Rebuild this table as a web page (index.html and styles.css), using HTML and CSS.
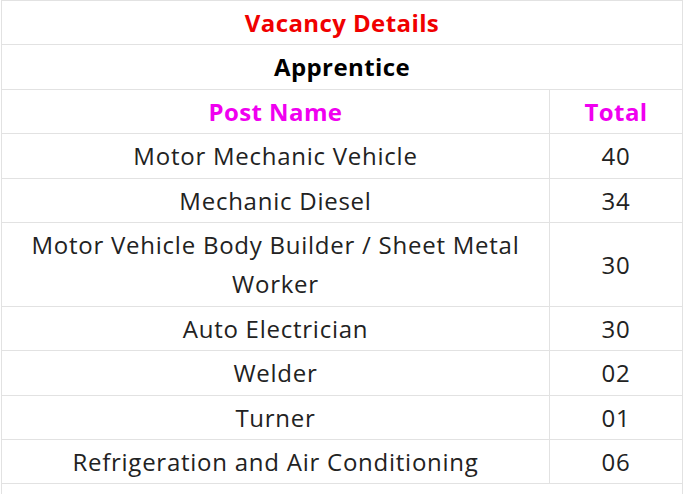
FILE: index.html
```html
<!DOCTYPE html>
<html lang="en">
<head>
<meta charset="utf-8">
<title>Vacancy Details</title>
<link rel="stylesheet" href="styles.css">
</head>
<body>
<table class="vacancy">
  <colgroup>
    <col class="col-name">
    <col class="col-total">
  </colgroup>
  <tbody>
    <tr><th colspan="2" class="title">Vacancy Details</th></tr>
    <tr><th colspan="2" class="subtitle">Apprentice</th></tr>
    <tr><th class="head">Post Name</th><th class="head">Total</th></tr>
    <tr><td>Motor Mechanic Vehicle</td><td>40</td></tr>
    <tr><td>Mechanic Diesel</td><td>34</td></tr>
    <tr><td>Motor Vehicle Body Builder / Sheet Metal Worker</td><td>30</td></tr>
    <tr><td>Auto Electrician</td><td>30</td></tr>
    <tr><td>Welder</td><td>02</td></tr>
    <tr><td>Turner</td><td>01</td></tr>
    <tr><td>Refrigeration and Air Conditioning</td><td>06</td></tr>
    <tr><td colspan="2">&nbsp;</td></tr>
  </tbody>
</table>
</body>
</html>
```
FILE: styles.css
```css
html, body {
  margin: 0;
  padding: 0;
  background: #fff;
}
body {
  font-family: "Open Sans", "Noto Sans", sans-serif;
  color: #222;
}
.vacancy {
  border-collapse: collapse;
  width: 681px;
  margin-left: 1px;
  table-layout: fixed;
}
.col-name {
  width: 548px;
}
.col-total {
  width: 133px;
}
.vacancy th,
.vacancy td {
  border: 1px solid #e2e2e2;
  padding: 2px 4px;
  text-align: center;
  font-size: 24px;
  line-height: 39.4px;
  letter-spacing: 0.75px;
}
.vacancy th {
  font-weight: 700;
  letter-spacing: 0.4px;
}
.title {
  color: #f00000;
}
.subtitle {
  color: #000;
}
.head {
  color: #f000f0;
}
```
